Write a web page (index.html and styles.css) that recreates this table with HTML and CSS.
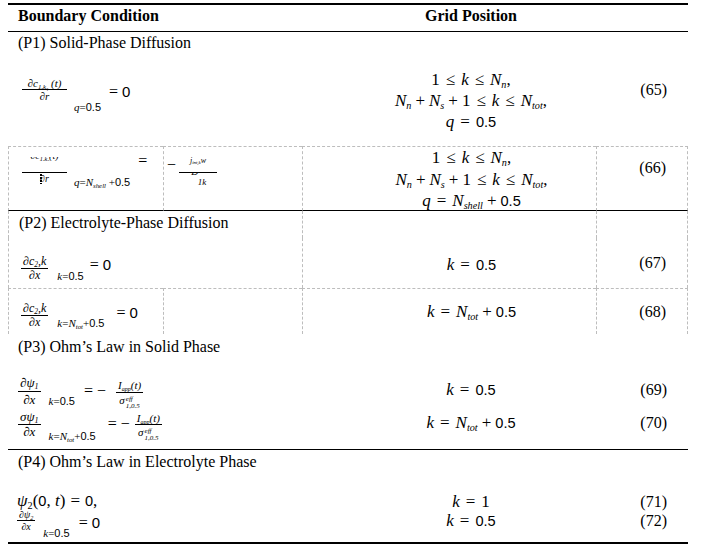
FILE: index.html
```html
<!DOCTYPE html>
<html>
<head>
<meta charset="utf-8">
<title>Boundary conditions</title>
<link rel="stylesheet" href="styles.css">
</head>
<body>
<div class="tbl">
  <!-- header -->
  <div class="c hd span2">Boundary Condition</div>
  <div class="c hd mid">Grid Position</div>
  <div class="c hd"></div>

  <!-- P1 -->
  <div class="c sec p1 span4">(P1) Solid-Phase Diffusion</div>

  <!-- 65 -->
  <div class="c span2 f65">
    <div class="fx">
      <span class="fr"><span class="n"><i>∂c</i><sub>1,<i>k</i><sub>q</sub></sub> (<i>t</i>)</span><span class="d"><i>∂r</i></span></span>
      <span class="ev"><i>q</i>=<span class="nb">0.5</span></span>
      <span class="eq">= <span class="nb">0</span></span>
    </div>
  </div>
  <div class="c mid m r65"><div><span class="sf">1</span><span class="o">≤</span><i>k</i><span class="o">≤</span><i>N</i><sub><i>n</i></sub>,</div><div><i>N</i><sub><i>n</i></sub><span class="b">+</span><i>N</i><sub><i>s</i></sub><span class="b">+</span><span class="sf">1</span><span class="o">≤</span><i>k</i><span class="o">≤</span><i>N</i><sub><i>tot</i></sub>,</div><div><i>q</i><span class="o">=</span><span class="nb">0.5</span></div></div>
  <div class="c num n65">(65)</div>

  <!-- 66 -->
  <div class="c dt sb dl f66a">
    <div class="fx">
      <span class="fr"><span class="n"><span class="clip"><span><i>∂c</i><sub>1,<i>k</i><sub>q</sub></sub>(<i>t</i>)</span></span></span><span class="d"><i>∂r</i><span class="caret"></span></span></span>
      <span class="ev"><i>q</i>=<i>N</i><sub><i>shell</i></sub> +<span class="nb">0.5</span></span>
      <span class="eq">=</span>
    </div>
  </div>
  <div class="c dt sb dl f66b">
    <div class="fx">
      <span class="eq">−</span>
      <span class="fr"><span class="n"><i>j</i><sub><i>int,k</i></sub><i>w</i></span><span class="d"><span class="clip"><span><i>D</i><sup><i>eff</i></sup></span></span><span class="lo">1<i>k</i></span></span></span>
    </div>
  </div>
  <div class="c dt sb dl mid m r66"><div><span class="sf">1</span><span class="o">≤</span><i>k</i><span class="o">≤</span><i>N</i><sub><i>n</i></sub>,</div><div><i>N</i><sub><i>n</i></sub><span class="b">+</span><i>N</i><sub><i>s</i></sub><span class="b">+</span><span class="sf">1</span><span class="o">≤</span><i>k</i><span class="o">≤</span><i>N</i><sub><i>tot</i></sub>,</div><div><i>q</i><span class="o">=</span><i>N</i><sub><i>shell</i></sub><span class="b">+</span><span class="nb">0.5</span></div></div>
  <div class="c dt sb dl dr num n66">(66)</div>

  <!-- P2 -->
  <div class="c sec p2 span2 dl">(P2) Electrolyte-Phase Diffusion</div>
  <div class="c dl"></div>
  <div class="c dl dr"></div>

  <!-- 67 -->
  <div class="c span2 dl f67">
    <div class="fx">
      <span class="fr"><span class="n"><i>∂c</i><sub>2</sub><i>,k</i></span><span class="d"><i>∂x</i></span></span>
      <span class="ev"><i>k</i>=<span class="nb">0.5</span></span>
      <span class="eq">= <span class="nb">0</span></span>
    </div>
  </div>
  <div class="c dl mid m r67"><i>k</i><span class="o">=</span><span class="nb">0.5</span></div>
  <div class="c dl dr num n67">(67)</div>

  <!-- 68 -->
  <div class="c dt dl f68">
    <div class="fx">
      <span class="fr"><span class="n"><i>∂c</i><sub>2</sub><i>,k</i></span><span class="d"><i>∂x</i></span></span>
      <span class="ev"><i>k</i>=<i>N</i><sub><i>tot</i></sub>+<span class="nb">0.5</span></span>
      <span class="eq">= <span class="nb">0</span></span>
    </div>
  </div>
  <div class="c dt dl"></div>
  <div class="c dt dl mid m r68"><i>k</i><span class="o">=</span><i>N</i><sub><i>tot</i></sub><span class="b">+</span><span class="nb">0.5</span></div>
  <div class="c dt dl dr num r68">(68)</div>

  <!-- P3 -->
  <div class="c sec p3 span4">(P3) Ohm’s Law in Solid Phase</div>

  <!-- 69 -->
  <div class="c span2 f69">
    <div class="fx">
      <span class="fr f1"><span class="n"><i>∂ψ</i><sub>1</sub></span><span class="d"><i>∂x</i></span></span>
      <span class="ev"><i>k</i>=<span class="nb">0.5</span></span>
      <span class="eq">= −</span>
      <span class="fr f2"><span class="n"><i>I</i><sub class="app"><i>app</i></sub>(<i>t</i>)</span><span class="d"><i>σ</i><span class="ss"><span class="sp"><i>eff</i></span><span class="sl">1,0.5</span></span></span></span>
    </div>
  </div>
  <div class="c mid m r69"><i>k</i><span class="o">=</span><span class="nb">0.5</span></div>
  <div class="c num r69">(69)</div>

  <!-- 70 -->
  <div class="c span2 f70">
    <div class="fx">
      <span class="fr f1"><span class="n"><i>σψ</i><sub>1</sub></span><span class="d"><i>∂x</i></span></span>
      <span class="ev"><i>k</i>=<i>N</i><sub><i>tot</i></sub>+<span class="nb">0.5</span></span>
      <span class="eq">= −</span>
      <span class="fr f2"><span class="n"><i>I</i><sub class="app"><i>app</i></sub>(<i>t</i>)</span><span class="d"><i>σ</i><span class="ss"><span class="sp"><i>eff</i></span><span class="sl">1,0.5</span></span></span></span>
    </div>
  </div>
  <div class="c mid m r70"><i>k</i><span class="o">=</span><i>N</i><sub><i>tot</i></sub><span class="b">+</span><span class="nb">0.5</span></div>
  <div class="c num r70">(70)</div>

  <!-- P4 -->
  <div class="c sec p4 span4">(P4) Ohm’s Law in Electrolyte Phase</div>

  <!-- 71 -->
  <div class="c span2 m f71"><i>ψ</i><sub>2</sub>(<span class="nb">0</span>, <i>t</i>)<span class="o">=</span><span class="nb">0</span>,</div>
  <div class="c mid m r71"><i>k</i><span class="o">=</span><span class="sf">1</span></div>
  <div class="c num r71">(71)</div>

  <!-- 72 -->
  <div class="c span2 f72">
    <div class="fx">
      <span class="fr"><span class="n"><i>∂ψ</i><sub>2</sub></span><span class="d"><i>∂x</i></span></span>
      <span class="ev"><i>k</i>=<span class="nb">0.5</span></span>
      <span class="eq">= <span class="nb">0</span></span>
    </div>
  </div>
  <div class="c mid m r72"><i>k</i><span class="o">=</span><span class="nb">0.5</span></div>
  <div class="c num r72">(72)</div>
</div>
</body>
</html>
```

FILE: styles.css
```css
* { box-sizing: border-box; }

html, body { background: #fff; }

body {
  margin: 3px 0 0 8px;
  font-family: "Liberation Serif", "DejaVu Serif", serif;
  font-size: 16px;
  line-height: 18px;
  color: #000;
}

i { font-style: italic; }

sub, sup {
  font-size: 0.62em;
  line-height: 0;
}
sub { vertical-align: -0.3em; }
sup { vertical-align: 0.45em; }

.tbl {
  width: 680px;
  display: grid;
  grid-template-columns: 155px 139px 294px 92px;
  grid-template-rows: 27px 26px 88px 65px 27px 50px 46px 30px 44px 41px 31px 26px 36px;
  border-top: 2px solid #000;
  border-bottom: 2px solid #000;
}

.c { min-width: 0; }
.span2 { grid-column: span 2; }
.span4 { grid-column: span 4; }

.hd {
  border-bottom: 1px solid #000;
  font-weight: bold;
  padding: 2px 0 0 10px;
}
.hd.mid { padding-left: 44px; }

.sec { padding-left: 10px; }
.p1 { padding-top: 2px; }
.p2 { padding-top: 3px; }
.p3 { padding-top: 4px; }
.p4 { padding-top: 3px; border-top: 1px solid #000; }

/* dashed cell rules */
.dt { border-top: 1px dashed #bdbdbd; }
.dl { border-left: 1px dashed #bdbdbd; }
.dr { border-right: 1px dashed #bdbdbd; }
.sb { border-bottom: 1px solid #000; }

/* grid position column */
.mid { text-align: center; padding-left: 44px; white-space: nowrap; }
.m { font-size: 17px; }
.m sub { font-size: 0.6em; }
.o { margin: 0 6px; }
.b { margin: 0 4px; }
.sf { font-family: "Liberation Serif", serif; }
.nb { font-family: "Liberation Sans", "Open Sans", sans-serif; font-size: 0.86em; font-style: normal; }

.r65 { line-height: 21px; padding-top: 11px; }
.r66 { line-height: 21.5px; padding-top: 0; }
.r67 { padding-top: 18px; }
.r68 { padding-top: 14px; }
.r69 { padding-top: 17px; }
.r70 { padding-top: 6px; }
.r71 { padding-top: 13px; }
.r72 { padding-top: 6px; }

/* equation numbers */
.num { text-align: right; padding-right: 21px; }
.n65 { padding-top: 23px; }
.n66 { padding-top: 12px; }
.n67 { padding-top: 16px; }

/* formulas */
.fx { display: flex; align-items: flex-start; white-space: nowrap; }
.fr {
  display: flex;
  flex-direction: column;
  align-items: center;
  font-style: italic;
}
.fr .n, .fr .d { padding: 0 2px; white-space: nowrap; }
.fr .d { border-top: 1px solid #000; align-self: stretch; text-align: center; }
.ev { font-size: 11px; line-height: 12px; }
.ev .nb { font-size: 11px; }
.ev sub { font-size: 0.62em; }
.eq { font-size: 16px; line-height: 18px; }
.eq .nb { font-size: 15px; }

.clip {
  display: flex;
  align-items: flex-end;
  height: 4px;
  overflow: hidden;
}
.clip > span { line-height: 10px; }

/* 65 */
.f65 { padding-left: 14px; }
.f65 .fr { margin-top: 19px; width: 45px; font-size: 11px; line-height: 12px; }
.f65 .fr .n { padding: 0; }
.f65 .ev { margin: 43px 0 0 7px; }
.f65 .eq { margin: 25px 0 0 8px; }

/* 66 */
.f66a { padding-left: 13px; }
.f66a .fr { margin-top: 10px; width: 45px; font-size: 10px; line-height: 12px; }
.f66a .fr .n { height: 15px; }
.f66a .fr .d { display: flex; justify-content: center; align-items: center; gap: 0; }
.caret {
  display: inline-block;
  width: 2px;
  height: 10px;
  margin-left: -9px;
  margin-right: 7px;
  background: repeating-linear-gradient(#000 0 2px, transparent 2px 3px);
}
.f66a .ev { margin: 29px 0 0 7px; }
.f66a .eq { margin: 5px 0 0 8px; }

.f66b { padding-left: 3px; }
.f66b .eq { margin-top: 9px; }
.f66b .fr { margin: 9px 0 0 3px; width: 38px; font-size: 8px; line-height: 10px; }
.f66b .fr .n { height: 16px; }
.f66b .fr .d { font-size: 10px; }
.f66b .clip { justify-content: center; }
.f66b .lo { display: block; font-size: 9px; line-height: 10px; padding-left: 8px; }

/* 67 / 68 */
.f67 { padding-left: 12px; }
.f67 .fr, .f68 .fr { font-size: 12px; }
.f67 .fr .n, .f68 .fr .n { line-height: 13px; }
.f67 .fr .d, .f68 .fr .d { line-height: 12px; }
.f67 .fr { margin-top: 17px; }
.f67 .ev { margin: 32px 0 0 9px; }
.f67 .eq { margin: 18px 0 0 6px; }

.f68 { padding-left: 12px; }
.f68 .fr { margin-top: 13px; }
.f68 .ev { margin: 28px 0 0 9px; }
.f68 .eq { margin: 15px 0 0 12px; }

/* 69 / 70 */
.f69, .f70 { padding-left: 10px; }
.fr.f1 { font-size: 13px; }
.fr.f2 { font-size: 11px; }
.ss {
  display: inline-block;
  vertical-align: -4px;
  line-height: 7px;
  font-size: 7px;
  text-align: left;
  margin-left: 1px;
}
.ss .sp, .ss .sl { display: block; }
.app { font-size: 0.55em; }

.f69 .f1 { margin-top: 11px; }
.f69 .f1 .n, .f69 .f1 .d { line-height: 16px; }
.f69 .ev { margin: 31px 0 0 8px; }
.f69 .eq { margin: 18px 0 0 9px; }
.f69 .f2 { margin: 14px 0 0 10px; }
.f69 .f2 .n { line-height: 14px; }
.f69 .f2 .d { line-height: 12px; padding-top: 1px; }

.f70 .f1 { margin-top: 2px; }
.f70 .f1 .n, .f70 .f1 .d { line-height: 14px; }
.f70 .ev { margin: 22px 0 0 8px; }
.f70 .eq { margin: 7px 0 0 12px; }
.f70 .f2 { margin: 4px 0 0 5px; }
.f70 .f2 .n { line-height: 12px; }
.f70 .f2 .d { line-height: 12px; padding-top: 1px; }

/* 71 / 72 */
.f71 { padding: 12px 0 0 9px; white-space: nowrap; }
.f71 .o { margin: 0 5px; }

.f72 { padding-left: 9px; }
.f72 .fr { margin-top: 4px; font-size: 10px; }
.f72 .fr .n { line-height: 10px; }
.f72 .fr .d { line-height: 12px; }
.f72 .ev { margin: 21px 0 0 8px; }
.f72 .eq { margin: 8px 0 0 9px; }
```
